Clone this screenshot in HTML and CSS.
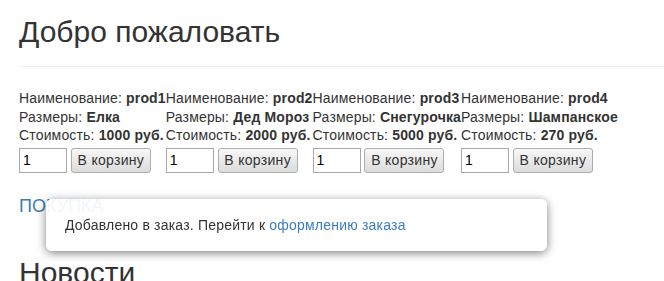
FILE: index.html
```html
<!DOCTYPE html>
<html lang="ru">
<head>
    <meta charset="UTF-8">
    <meta name="viewport" content="width=device-width, initial-scale=1.0">
    <title>Магазин</title>
    <link rel="stylesheet" href="styles.css">
</head>
<body>

<div class="container">
    <div class="page-header">
        <h1>Добро пожаловать</h1>
    </div>

    <div class="products"><div class="product">
            <div>Наименование: <b>prod1</b></div>
            <div>Размеры: <b>Елка</b></div>
            <div>Стоимость: <b>1000 руб.</b></div>
            <div class="buy"><input type="text" value="1"> <button>В корзину</button></div>
        </div><div class="product">
            <div>Наименование: <b>prod2</b></div>
            <div>Размеры: <b>Дед Мороз</b></div>
            <div>Стоимость: <b>2000 руб.</b></div>
            <div class="buy"><input type="text" value="1"> <button>В корзину</button></div>
        </div><div class="product">
            <div>Наименование: <b>prod3</b></div>
            <div>Размеры: <b>Снегурочка</b></div>
            <div>Стоимость: <b>5000 руб.</b></div>
            <div class="buy"><input type="text" value="1"> <button>В корзину</button></div>
        </div><div class="product">
            <div>Наименование: <b>prod4</b></div>
            <div>Размеры: <b>Шампанское</b></div>
            <div>Стоимость: <b>270 руб.</b></div>
            <div class="buy"><input type="text" value="1"> <button>В корзину</button></div>
        </div></div>

    <a href="#" class="buy-link">ПОКУПКА</a>

    <h2 class="news">Новости</h2>
</div>

<div class="toast">
    Добавлено в заказ. Перейти к <a href="#">оформлению заказа</a>
</div>

</body>
</html>
```

FILE: styles.css
```css
body {
    font-family: "Liberation Sans", Arial, sans-serif;
    font-size: 14px;
    line-height: 18.5px;
    color: #333;
    background: #fff;
    margin: 0;
    padding: 0;
}
a {
    color: #3b7dbf;
    text-decoration: none;
}
.container {
    padding-left: 19px;
}
.page-header {
    border-bottom: 1px solid #eee;
    padding-bottom: 18px;
    margin-bottom: 22px;
}
.page-header h1 {
    font-size: 30px;
    font-weight: normal;
    line-height: 33px;
    margin: 0;
    padding-top: 15px;
}
.products {
    letter-spacing: 0.16px;
}
.product {
    display: inline-block;
    vertical-align: top;
}
.buy {
    margin-top: 3px;
    height: 25px;
    letter-spacing: 0;
}
.buy input {
    width: 48px;
    height: 25px;
    box-sizing: border-box;
    padding: 2px 3px;
    border: 1px solid #a9a9a9;
    font-family: inherit;
    font-size: 14px;
    color: #000;
    vertical-align: top;
}
.buy button {
    width: 80px;
    height: 25px;
    border: 1px solid #adadad;
    border-radius: 3px;
    background: linear-gradient(#f7f7f7, #dcdcdc);
    font-family: inherit;
    font-size: 14px;
    letter-spacing: 0.3px;
    color: #333;
    vertical-align: top;
    padding: 0;
}
.buy-link {
    display: inline-block;
    margin-top: 23px;
    font-size: 18px;
    line-height: 20px;
}
.news {
    font-size: 30px;
    font-weight: normal;
    line-height: 33px;
    margin: 40px 0 0;
}
.toast {
    position: fixed;
    left: 46px;
    top: 199px;
    width: 501px;
    height: 52px;
    box-sizing: border-box;
    padding-left: 19px;
    line-height: 52px;
    letter-spacing: 0.2px;
    background: rgba(255, 255, 255, 0.93);
    border-radius: 6px;
    box-shadow: 0 2px 10px rgba(0, 0, 0, 0.5);
    color: #333;
}
```
